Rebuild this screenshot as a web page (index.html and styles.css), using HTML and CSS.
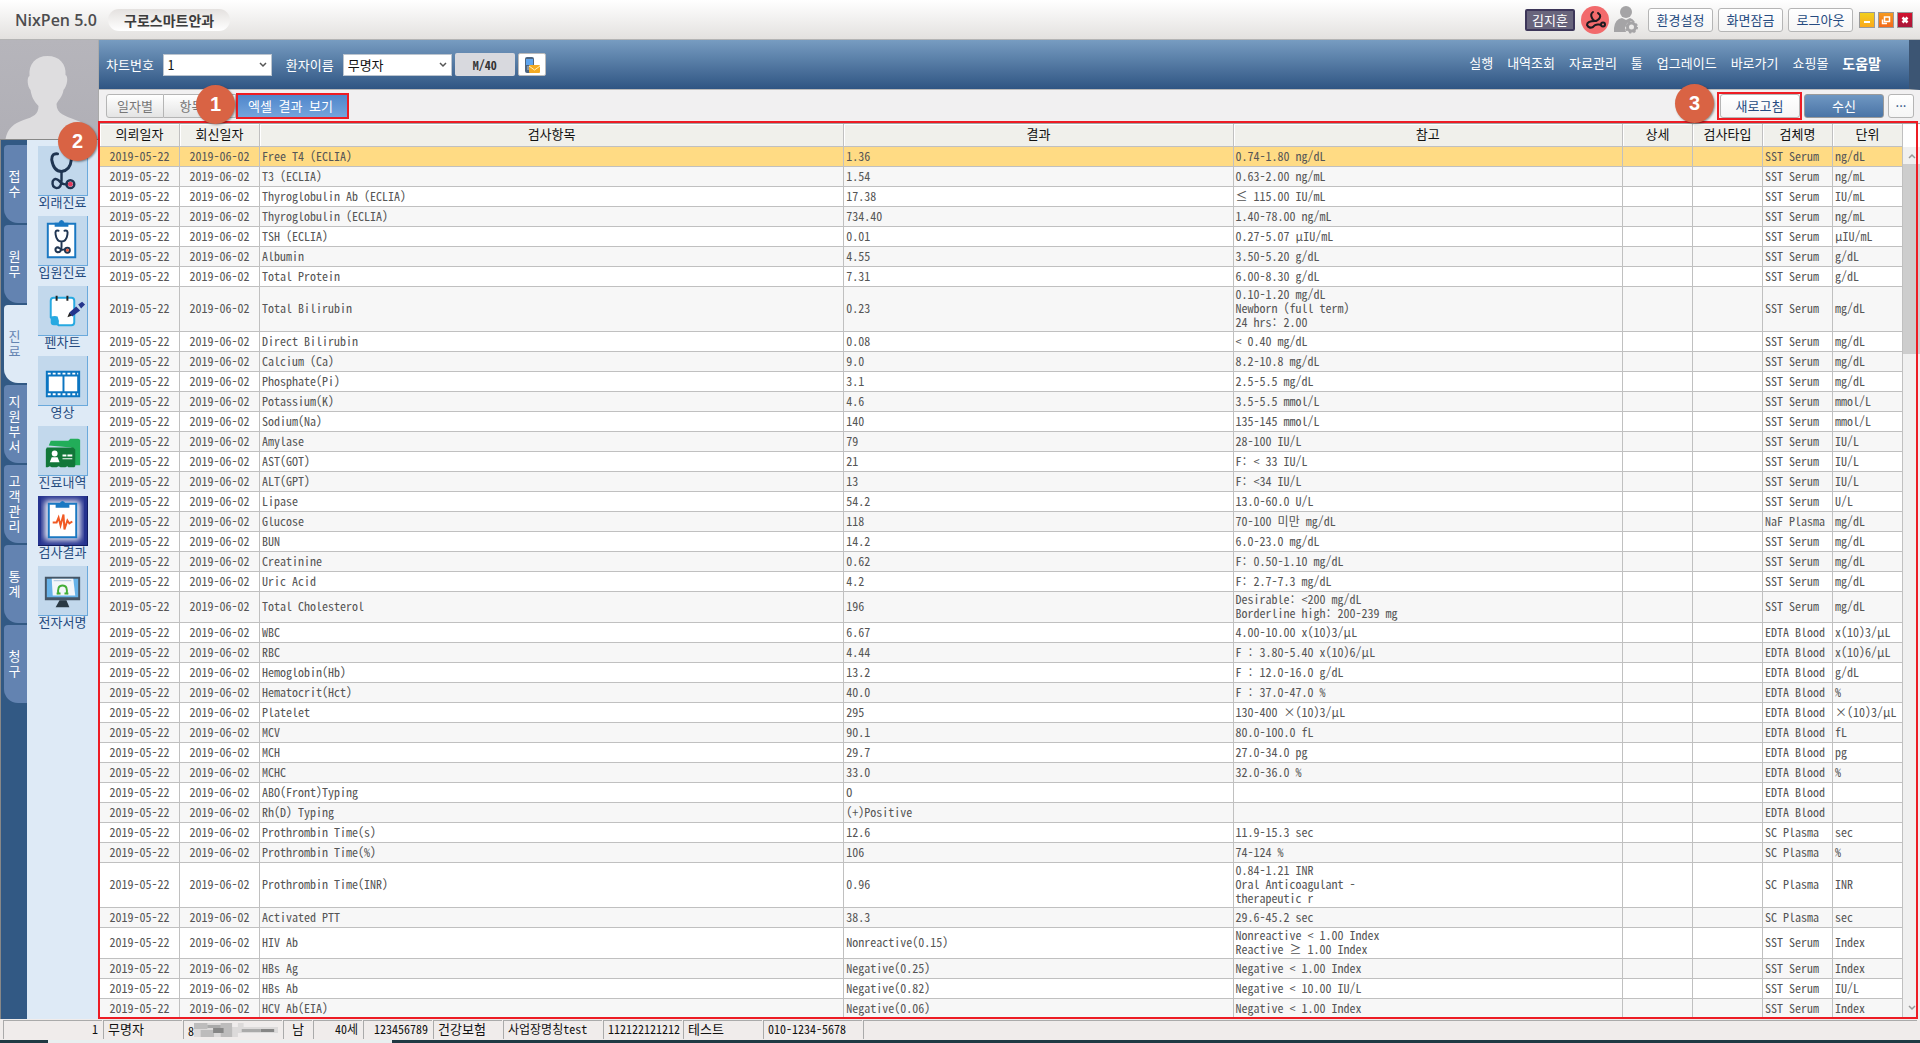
FILE: index.html
```html
<!DOCTYPE html>
<html lang="ko">
<head>
<meta charset="utf-8">
<title>NixPen 5.0</title>
<link rel="stylesheet" href="styles.css">
</head>
<body>
<header class="titlebar">
  <h1 class="brand">NixPen 5.0</h1>
  <span class="clinic">구로스마트안과</span>
  <div class="title-tools">
    <button class="user" type="button">김지훈</button>
    <svg class="doctor" viewBox="0 0 28 28" aria-hidden="true"><circle cx="14" cy="14" r="14" fill="#f26a6c"/><g fill="none" stroke="#1d1a20" stroke-width="2" stroke-linecap="round"><path d="M12 6Q9 8 11 12Q13 16 16 14.500Q20 12 19 9L17 7"/><path d="M14 15Q6 15 6 19Q8 23 12 21Q14 18 18 18.500L20 19"/><circle cx="22" cy="18.500" r="2"/></g></svg>
    <svg class="person" viewBox="0 0 24 28" aria-hidden="true"><g fill="#a5a4a6"><circle cx="12" cy="6" r="6"/><path d="M0 26V22Q1 13 8 12L12 14 16 12Q19 13 20 15Q12 15 11 22L12 26Z"/></g><circle cx="17.500" cy="21" r="4" fill="none" stroke="#a5a4a6" stroke-width="3"/><circle cx="17.500" cy="21" r="5.500" fill="none" stroke="#a5a4a6" stroke-width="2" stroke-dasharray="2.200 2.120"/></svg>
    <button class="btn" type="button">환경설정</button>
    <button class="btn" type="button">화면잠금</button>
    <button class="btn" type="button">로그아웃</button>
    <div class="window-buttons">
      <button class="win min" type="button" aria-label="최소화"><svg viewBox="0 0 14 14"><path d="M4 8h6v2H4z" fill="#fff"/></svg></button>
      <button class="win restore" type="button" aria-label="이전 크기로"><svg viewBox="0 0 14 14"><path d="M5.500 4h5v4.500h-5zM3.500 6.500v4h4.500" fill="none" stroke="#fff" stroke-width="1.500"/></svg></button>
      <button class="win close" type="button" aria-label="닫기"><svg viewBox="0 0 14 14"><path d="M4.500 4.500l5 5M9.500 4.500l-5 5" stroke="#fff" stroke-width="2.500"/></svg></button>
    </div>
  </div>
</header>

<div class="workspace">
  <aside class="sidebar">
    <svg class="avatar" viewBox="0 0 99 99" preserveAspectRatio="xMidYMax slice" aria-hidden="true"><path fill="#dedddf" d="M48 16C60 16 67 24 66 35C69 36 68 46 64 50C63 57 58 61 57 64C57 74 66 76 76 80C88 84 90 90 92 99H6C8 88 14 84 24 80C34 77 39 74 39 66C34 61 32 56 31 50C28 47 27 37 30 36C29 24 36 16 48 16Z"/></svg>
    <div class="nav">
      <nav class="vtabs">
        <button type="button">접수</button>
        <button type="button">원무</button>
        <button type="button" class="on">진료</button>
        <button type="button">지원부서</button>
        <button type="button">고객관리</button>
        <button type="button">통계</button>
        <button type="button">청구</button>
      </nav>
      <nav class="shortcuts">
        <a href="#"><svg viewBox="0 0 50 50"><g fill="none" stroke="#1f3552" stroke-linecap="round"><path d="M20 8Q14 7 14 14Q16 26 24 26Q33 25 34 14Q34 7 28 8" stroke-width="3"/><path d="M24 26V35Q24 43 19 43Q14 42 15 36Q17 32 21 35Q25 40 30 39" stroke-width="2.500"/><circle cx="33" cy="39" r="4" stroke-width="2.500"/></g><circle cx="33" cy="39" r="2.500" fill="#e23b5c"/></svg>외래진료</a>
        <a href="#"><svg viewBox="0 0 50 50"><path d="M10 8h28v34H10z" fill="#fff" stroke="#1a78c2" stroke-width="2"/><path d="M17 11V7h4q1-3 3-3t3 3h4v4z" fill="#1a78c2"/><g fill="none" stroke="#1f3552" stroke-width="2" stroke-linecap="round"><path d="M21 15q-4-1-3 4 1 7 6 7t6-7q1-5-3-4M24 26v5q0 6-4 6-3-1-2-4 2-2 4 0t5 1"/><circle cx="30" cy="35" r="2.500"/></g><circle cx="30" cy="35" r="1.500" fill="#ef5d3b"/></svg>입원진료</a>
        <a href="#"><svg viewBox="0 0 50 50"><path d="M16 12h18q3 0 3 3v22q0 3-3 3H21l-8-8V15q0-3 3-3z" fill="#fff" stroke="#27a9e1" stroke-width="2"/><path d="M13 31q5-1 7 0 2 4 1 9l-5 0q-3 0-3-3z" fill="#27a9e1"/><path d="M19 10v5M30 10v5" stroke="#222" stroke-width="2"/><path d="M30 32l2-5 3 3z" fill="#222"/><path d="M32 27l7-6 4 4-8 6z" fill="#26358c"/><path d="M41 19l4-3 3 3-4 4z" fill="#26358c"/></svg>펜차트</a>
        <a href="#"><svg viewBox="0 0 50 50"><path d="M8 15h35v27H8z" fill="#0b75c1"/><path d="M11 21h14v15H11zM27 21h13v15H27z" fill="#fff"/><path d="M10 18h31M10 39h31" stroke="#fff" stroke-width="2" stroke-dasharray="3 2"/></svg>영상</a>
        <a href="#"><svg viewBox="0 0 50 50"><path d="M11 20l2-5h18l2-2h8l2 1v26h-6l-3-18z" fill="#22ad59"/><path d="M9 22h27l2 2v17l-1 1h-6l-1-1-2 1h-5l-2-1-2 1h-5l-2-1-2 1H8V24z" fill="#127739"/><circle cx="17" cy="28" r="3" fill="#fff"/><path d="M12 37l2-5h6l2 5zM25 29h4v2h-4zM30 29h5v2h-5zM25 33h10v1H25z" fill="#fff"/></svg>진료내역</a>
        <a href="#" class="on"><svg viewBox="0 0 50 50"><defs><filter id="glow"><feGaussianBlur stdDeviation="3"/></filter></defs><rect x="7" y="5" width="36" height="40" fill="#fff" filter="url(#glow)"/><path d="M11 8h28v34H11z" fill="#fff" stroke="#1a78c2" stroke-width="2"/><path d="M18 12V8h4q1-3 3-3t3 3h4v4z" fill="#1a78c2"/><path d="M15 27h4l2-5 2 8 3-11 1 15 3-9 2 3 3-2" fill="none" stroke="#f15a24" stroke-width="2"/></svg>검사결과</a>
        <a href="#"><svg viewBox="0 0 50 50"><path d="M7 11h36v24H7z" fill="#455565"/><path d="M9 13h32v19H9z" fill="#66b2e8"/><path d="M14 13h22l2 17H15z" fill="#f3f6fa"/><path d="M16 15h18" stroke="#aac3dc"/><path d="M21 29q-2-9 4-9t4 9M19 28h4M27 28h4" fill="none" stroke="#42ae36" stroke-width="2"/><path d="M22 35h7l3 7H18z" fill="#2b3a44"/></svg>전자서명</a>
      </nav>
    </div>
  </aside>

  <main class="content">
    <div class="patientbar">
      <div class="patient-fields">
        <label for="chart">차트번호</label>
        <span class="select"><select id="chart"><option>1</option></select><svg viewBox="0 0 8 6" aria-hidden="true"><path d="M1 1l3 3 3-3" fill="none" stroke="#555" stroke-width="1.500"/></svg></span>
        <label for="name">환자이름</label>
        <span class="select"><select id="name"><option>무명자</option></select><svg viewBox="0 0 8 6" aria-hidden="true"><path d="M1 1l3 3 3-3" fill="none" stroke="#555" stroke-width="1.500"/></svg></span>
        <span class="sexage">M/40</span>
        <button class="phone" type="button" aria-label="문자 보내기"><svg viewBox="0 0 18 18"><rect x="2" y="1" width="9" height="16" rx="2" fill="#4d6580"/><rect x="3" y="3" width="7" height="6" fill="#5fa5ee"/><path d="M4 11h5M4 13h5" stroke="#bcc9d6"/><rect x="6" y="9" width="11" height="8" rx="1" fill="#f5ab22"/><path d="M6 10l5.500 4 5.500-4" fill="none" stroke="#fff0b8"/></svg></button>
      </div>
      <nav class="menu">
        <a href="#">실행</a><a href="#">내역조회</a><a href="#">자료관리</a><a href="#">툴</a><a href="#">업그레이드</a><a href="#">바로가기</a><a href="#">쇼핑몰</a><a href="#" class="help">도움말</a>
      </nav>
    </div>

    <div class="toolbar">
      <div class="views">
        <button type="button">일자별</button><button type="button" class="second">항목별</button><button type="button" class="on">엑셀 결과 보기</button>
        <span class="callout one">1</span>
      </div>
      <div class="actions">
        <div class="marked"><button type="button" class="btn wide">새로고침</button><span class="callout three">3</span></div>
        <button type="button" class="btn wide primary">수신</button>
        <button type="button" class="btn more" aria-label="더 보기">···</button>
      </div>
    </div>

    <section class="results">
      <span class="callout two">2</span>
      <table>
        <colgroup><col class="date"><col class="date"><col class="item"><col class="value"><col><col class="small"><col class="small"><col class="small"><col class="small"></colgroup>
        <thead><tr><th>의뢰일자</th><th>회신일자</th><th>검사항목</th><th>결과</th><th>참고</th><th>상세</th><th>검사타입</th><th>검체명</th><th>단위</th></tr></thead>
        <tbody>
        <tr class="selected"><td>2019-05-22</td><td>2019-06-02</td><td>Free T4 (ECLIA)</td><td>1.36</td><td>0.74-1.80 ng/dL</td><td></td><td></td><td>SST Serum</td><td>ng/dL</td></tr>
        <tr><td>2019-05-22</td><td>2019-06-02</td><td>T3 (ECLIA)</td><td>1.54</td><td>0.63-2.00 ng/mL</td><td></td><td></td><td>SST Serum</td><td>ng/mL</td></tr>
        <tr><td>2019-05-22</td><td>2019-06-02</td><td>Thyroglobulin Ab (ECLIA)</td><td>17.38</td><td>≤ 115.00 IU/mL</td><td></td><td></td><td>SST Serum</td><td>IU/mL</td></tr>
        <tr><td>2019-05-22</td><td>2019-06-02</td><td>Thyroglobulin (ECLIA)</td><td>734.40</td><td>1.40-78.00 ng/mL</td><td></td><td></td><td>SST Serum</td><td>ng/mL</td></tr>
        <tr><td>2019-05-22</td><td>2019-06-02</td><td>TSH (ECLIA)</td><td>0.01</td><td>0.27-5.07 μIU/mL</td><td></td><td></td><td>SST Serum</td><td>μIU/mL</td></tr>
        <tr><td>2019-05-22</td><td>2019-06-02</td><td>Albumin</td><td>4.55</td><td>3.50-5.20 g/dL</td><td></td><td></td><td>SST Serum</td><td>g/dL</td></tr>
        <tr><td>2019-05-22</td><td>2019-06-02</td><td>Total Protein</td><td>7.31</td><td>6.00-8.30 g/dL</td><td></td><td></td><td>SST Serum</td><td>g/dL</td></tr>
        <tr><td>2019-05-22</td><td>2019-06-02</td><td>Total Bilirubin</td><td>0.23</td><td>0.10-1.20 mg/dL<br>Newborn (full term)<br>24 hrs: 2.00</td><td></td><td></td><td>SST Serum</td><td>mg/dL</td></tr>
        <tr><td>2019-05-22</td><td>2019-06-02</td><td>Direct Bilirubin</td><td>0.08</td><td>&lt; 0.40 mg/dL</td><td></td><td></td><td>SST Serum</td><td>mg/dL</td></tr>
        <tr><td>2019-05-22</td><td>2019-06-02</td><td>Calcium (Ca)</td><td>9.0</td><td>8.2-10.8 mg/dL</td><td></td><td></td><td>SST Serum</td><td>mg/dL</td></tr>
        <tr><td>2019-05-22</td><td>2019-06-02</td><td>Phosphate(Pi)</td><td>3.1</td><td>2.5-5.5 mg/dL</td><td></td><td></td><td>SST Serum</td><td>mg/dL</td></tr>
        <tr><td>2019-05-22</td><td>2019-06-02</td><td>Potassium(K)</td><td>4.6</td><td>3.5-5.5 mmol/L</td><td></td><td></td><td>SST Serum</td><td>mmol/L</td></tr>
        <tr><td>2019-05-22</td><td>2019-06-02</td><td>Sodium(Na)</td><td>140</td><td>135-145 mmol/L</td><td></td><td></td><td>SST Serum</td><td>mmol/L</td></tr>
        <tr><td>2019-05-22</td><td>2019-06-02</td><td>Amylase</td><td>79</td><td>28-100 IU/L</td><td></td><td></td><td>SST Serum</td><td>IU/L</td></tr>
        <tr><td>2019-05-22</td><td>2019-06-02</td><td>AST(GOT)</td><td>21</td><td>F: &lt; 33 IU/L</td><td></td><td></td><td>SST Serum</td><td>IU/L</td></tr>
        <tr><td>2019-05-22</td><td>2019-06-02</td><td>ALT(GPT)</td><td>13</td><td>F: &lt;34 IU/L</td><td></td><td></td><td>SST Serum</td><td>IU/L</td></tr>
        <tr><td>2019-05-22</td><td>2019-06-02</td><td>Lipase</td><td>54.2</td><td>13.0-60.0 U/L</td><td></td><td></td><td>SST Serum</td><td>U/L</td></tr>
        <tr><td>2019-05-22</td><td>2019-06-02</td><td>Glucose</td><td>118</td><td>70-100 미만 mg/dL</td><td></td><td></td><td>NaF Plasma</td><td>mg/dL</td></tr>
        <tr><td>2019-05-22</td><td>2019-06-02</td><td>BUN</td><td>14.2</td><td>6.0-23.0 mg/dL</td><td></td><td></td><td>SST Serum</td><td>mg/dL</td></tr>
        <tr><td>2019-05-22</td><td>2019-06-02</td><td>Creatinine</td><td>0.62</td><td>F: 0.50-1.10 mg/dL</td><td></td><td></td><td>SST Serum</td><td>mg/dL</td></tr>
        <tr><td>2019-05-22</td><td>2019-06-02</td><td>Uric Acid</td><td>4.2</td><td>F: 2.7-7.3 mg/dL</td><td></td><td></td><td>SST Serum</td><td>mg/dL</td></tr>
        <tr><td>2019-05-22</td><td>2019-06-02</td><td>Total Cholesterol</td><td>196</td><td>Desirable: &lt;200 mg/dL<br>Borderline high: 200-239 mg</td><td></td><td></td><td>SST Serum</td><td>mg/dL</td></tr>
        <tr><td>2019-05-22</td><td>2019-06-02</td><td>WBC</td><td>6.67</td><td>4.00-10.00 x(10)3/μL</td><td></td><td></td><td>EDTA Blood</td><td>x(10)3/μL</td></tr>
        <tr><td>2019-05-22</td><td>2019-06-02</td><td>RBC</td><td>4.44</td><td>F : 3.80-5.40 x(10)6/μL</td><td></td><td></td><td>EDTA Blood</td><td>x(10)6/μL</td></tr>
        <tr><td>2019-05-22</td><td>2019-06-02</td><td>Hemoglobin(Hb)</td><td>13.2</td><td>F : 12.0-16.0 g/dL</td><td></td><td></td><td>EDTA Blood</td><td>g/dL</td></tr>
        <tr><td>2019-05-22</td><td>2019-06-02</td><td>Hematocrit(Hct)</td><td>40.0</td><td>F : 37.0-47.0 %</td><td></td><td></td><td>EDTA Blood</td><td>%</td></tr>
        <tr><td>2019-05-22</td><td>2019-06-02</td><td>Platelet</td><td>295</td><td>130-400 ×(10)3/μL</td><td></td><td></td><td>EDTA Blood</td><td>×(10)3/μL</td></tr>
        <tr><td>2019-05-22</td><td>2019-06-02</td><td>MCV</td><td>90.1</td><td>80.0-100.0 fL</td><td></td><td></td><td>EDTA Blood</td><td>fL</td></tr>
        <tr><td>2019-05-22</td><td>2019-06-02</td><td>MCH</td><td>29.7</td><td>27.0-34.0 pg</td><td></td><td></td><td>EDTA Blood</td><td>pg</td></tr>
        <tr><td>2019-05-22</td><td>2019-06-02</td><td>MCHC</td><td>33.0</td><td>32.0-36.0 %</td><td></td><td></td><td>EDTA Blood</td><td>%</td></tr>
        <tr><td>2019-05-22</td><td>2019-06-02</td><td>ABO(Front)Typing</td><td>O</td><td></td><td></td><td></td><td>EDTA Blood</td><td></td></tr>
        <tr><td>2019-05-22</td><td>2019-06-02</td><td>Rh(D) Typing</td><td>(+)Positive</td><td></td><td></td><td></td><td>EDTA Blood</td><td></td></tr>
        <tr><td>2019-05-22</td><td>2019-06-02</td><td>Prothrombin Time(s)</td><td>12.6</td><td>11.9-15.3 sec</td><td></td><td></td><td>SC Plasma</td><td>sec</td></tr>
        <tr><td>2019-05-22</td><td>2019-06-02</td><td>Prothrombin Time(%)</td><td>106</td><td>74-124 %</td><td></td><td></td><td>SC Plasma</td><td>%</td></tr>
        <tr><td>2019-05-22</td><td>2019-06-02</td><td>Prothrombin Time(INR)</td><td>0.96</td><td>0.84-1.21 INR<br>Oral Anticoagulant -<br>therapeutic r</td><td></td><td></td><td>SC Plasma</td><td>INR</td></tr>
        <tr><td>2019-05-22</td><td>2019-06-02</td><td>Activated PTT</td><td>38.3</td><td>29.6-45.2 sec</td><td></td><td></td><td>SC Plasma</td><td>sec</td></tr>
        <tr><td>2019-05-22</td><td>2019-06-02</td><td>HIV Ab</td><td>Nonreactive(0.15)</td><td>Nonreactive &lt; 1.00 Index<br>Reactive ≥ 1.00 Index</td><td></td><td></td><td>SST Serum</td><td>Index</td></tr>
        <tr><td>2019-05-22</td><td>2019-06-02</td><td>HBs Ag</td><td>Negative(0.25)</td><td>Negative &lt; 1.00 Index</td><td></td><td></td><td>SST Serum</td><td>Index</td></tr>
        <tr><td>2019-05-22</td><td>2019-06-02</td><td>HBs Ab</td><td>Negative(0.82)</td><td>Negative &lt; 10.00 IU/L</td><td></td><td></td><td>SST Serum</td><td>IU/L</td></tr>
        <tr><td>2019-05-22</td><td>2019-06-02</td><td>HCV Ab(EIA)</td><td>Negative(0.06)</td><td>Negative &lt; 1.00 Index</td><td></td><td></td><td>SST Serum</td><td>Index</td></tr>
        </tbody>
      </table>
      <div class="scrollbar" aria-hidden="true">
        <svg viewBox="0 0 8 6"><path d="M1 5l3-3 3 3" fill="none" stroke="#999" stroke-width="1.500"/></svg>
        <div class="thumb"></div>
        <svg class="down" viewBox="0 0 8 6"><path d="M1 1l3 3 3-3" fill="none" stroke="#999" stroke-width="1.500"/></svg>
      </div>
    </section>
  </main>
</div>

<footer class="status">
  <span class="right">1</span><span class="hangul">무명자</span><span class="masked">8<svg viewBox="0 0 88 14" preserveAspectRatio="none" aria-hidden="true"><path fill="#dcdada" d="M0 0h88v14H0z"/><path fill="#bdbcbc" d="M0 0h14v6H0zM7 7h14v7H7zM28 0h12v14H28z"/><path fill="#868686" d="M20 5h11v5H20zM70 6h14v3H70z"/><path fill="#aaa" d="M14 2h14v3H14zM50 6h20v3H50z"/><path fill="#efecec" d="M40 0h6v4h-6zM52 0h36v4H52zM46 10h42v4H46z"/></svg></span><span class="hangul center">남</span><span class="right">40세</span><span class="right">123456789</span><span class="hangul">건강보험</span><span>사업장명칭test</span><span>112122121212</span><span class="hangul">테스트</span><span>010-1234-5678</span><span></span>
</footer>
<div class="taskbar"><div class="window"></div></div>
</body>
</html>
```

FILE: styles.css
```css
* { box-sizing: border-box; }

body {
  margin: 0;
  background: #f0eeed;
  color: #111;
  font: 13px/14px "Noto Sans Mono CJK KR", "Liberation Mono", "Noto Sans CJK KR", monospace;
}

button, select { font: inherit; color: inherit; }
button { padding: 0; cursor: pointer; }
a { color: inherit; text-decoration: none; }
svg { display: block; }

/* Title bar */
.titlebar {
  display: flex;
  align-items: center;
  height: 40px;
  padding: 0 7px 0 15px;
  background: linear-gradient(#fff, #e3e1df);
  border-bottom: 1px solid #b4b4b4;
}
.brand {
  margin: 0;
  width: 93px;
  font: 600 16px/24px "Open Sans", "Noto Sans", sans-serif;
  color: #4d4d4f;
  white-space: nowrap;
}
.clinic {
  padding: 0 16px;
  font-size: 14px;
  font-weight: bold;
  line-height: 22px;
  color: #3c3c3c;
  border-radius: 11px;
  background: linear-gradient(#e4e1df, #fff);
}
.title-tools { display: flex; align-items: center; gap: 5px; margin-left: auto; }
.user {
  width: 50px;
  height: 22px;
  background: #68647c;
  border: 2px solid #3d3659;
  border-radius: 2px;
  color: #fff;
  line-height: 16px;
}
.doctor { width: 28px; height: 28px; margin-left: 1px; }
.person { width: 24px; height: 28px; margin-right: 5px; }
.btn {
  width: 65px;
  height: 24px;
  background: linear-gradient(#fff, #f5f5f5);
  border: 1px solid #b5b5b5;
  border-radius: 3px;
  color: #254a80;
}
.window-buttons { display: flex; gap: 3px; margin-left: 1px; }
.win { width: 16px; height: 16px; border: 1px solid #999; }
.min { background: linear-gradient(#f2cf1c, #fba91a); }
.restore { background: linear-gradient(#f59a1e, #f4691b); }
.close { background: linear-gradient(#d3122e, #a8183b); }

/* Side navigation */
.workspace { display: grid; grid-template-columns: 99px 1fr; }
.sidebar {
  display: flex;
  flex-direction: column;
  border-right: 1px solid #aaa;
}
.avatar {
  width: 100%;
  height: 100px;
  background: linear-gradient(#b6b5bb, #b0afb6);
  border-bottom: 1px solid #888;
}
.nav {
  flex: 1;
  display: grid;
  grid-template-columns: 26px 1fr;
  background: #deeaf6;
  border-left: 1px solid #888;
}
.vtabs {
  display: flex;
  flex-direction: column;
  gap: 2px;
  padding: 5px 0 0 3px;
  background: #325984;
}
.vtabs button {
  height: 78px;
  padding: 0 6px 2px 4px;
  border: 0;
  border-radius: 4px 0 0 14px;
  background: #6383b1;
  color: #fff;
  line-height: 15px;
  word-break: break-all;
}
.vtabs .on { background: #deeaf6; color: #6383b1; }
.shortcuts {
  display: flex;
  flex-direction: column;
  align-items: center;
  gap: 8px;
  padding-top: 6px;
  color: #254a80;
  line-height: 12px;
  text-align: center;
}
.shortcuts svg {
  width: 50px;
  height: 50px;
  margin: 0 auto;
  background: #c2d8ec;
  border: solid #6aa9dc;
  border-width: 0 1px 1px 0;
}
.shortcuts .on svg { background: #25338f; border-color: #101c60; }

/* Patient bar */
.content { min-width: 0; }
.patientbar {
  display: flex;
  justify-content: space-between;
  height: 50px;
  color: #fff;
  border-bottom: 1px solid #bbb;
  border-right: 11px solid #3c5573;
  background: linear-gradient(#779cc1, #2f5583);
}
.patient-fields { display: flex; align-items: center; padding-left: 7px; }
.select { display: grid; align-items: center; margin: 0 14px 0 9px; }
.select + .sexage { margin-left: -11px; }
.select > * { grid-area: 1 / 1; }
.select select {
  width: 109px;
  height: 22px;
  padding: 0 4px;
  appearance: none;
  border: 1px solid #bcc5cf;
  border-radius: 0;
  background: #fff;
  color: #111;
}
.select svg { width: 8px; height: 6px; margin-right: 5px; justify-self: end; pointer-events: none; }
.sexage {
  width: 60px;
  font-size: 12px;
  line-height: 23px;
  text-align: center;
  font-weight: bold;
  color: #333;
  background: #d8d9de;
  border-radius: 2px;
}
.phone {
  display: grid;
  place-items: center;
  width: 28px;
  height: 23px;
  margin-left: 3px;
  background: #fff;
  border: 1px solid #bbb;
  border-radius: 2px;
}
.phone svg { width: 18px; height: 18px; }
.menu { display: flex; align-items: center; gap: 14px; padding: 0 28px 3px 0; }
.help { font-size: 14px; font-weight: bold; }

/* View switch and actions */
.toolbar {
  display: flex;
  justify-content: space-between;
  align-items: center;
  height: 33px;
  padding: 0 6px 2px 7px;
  background: #f1f0f1;
}
.views { position: relative; display: flex; align-items: center; }
.views button {
  width: 58px;
  height: 24px;
  border: 1px solid #b5b5b5;
  border-radius: 3px 0 0 3px;
  background: linear-gradient(#fff, #e4e4e4);
  color: #777;
}
.views .second { width: 72px; padding-right: 4px; border-left: 0; border-radius: 0; }
.views .on {
  width: 113px;
  height: 26px;
  padding-right: 4px;
  border: 2px solid #ed1c24;
  border-radius: 0;
  background: linear-gradient(#4f86cb, #74a4dc);
  color: #fff;
}
.actions { display: flex; align-items: center; gap: 4px; }
.marked {
  position: relative;
  display: grid;
  place-items: center;
  width: 85px;
  height: 28px;
  margin-right: -2px;
  border: 2px solid #ed1c24;
}
.wide { width: 80px; }
.primary { background: linear-gradient(#6f97c2, #4a74a6); border-color: #9a9a9a; color: #fff; }
.more { width: 26px; }
.callout {
  position: absolute;
  z-index: 2;
  width: 39px;
  height: 39px;
  border-radius: 50%;
  background: #d96344;
  box-shadow: 1px 1px 2px #0006;
  color: #fff;
  font: bold 20px/39px "Liberation Sans", sans-serif;
  text-align: center;
}
.one { left: 90px; top: -8px; }
.two { left: -42px; top: -2px; }
.three { right: 86px; top: -10px; }

/* Results grid */
.results {
  position: relative;
  display: grid;
  grid-template-columns: 1fr 17px;
  border: solid #a5a5a5;
  border-width: 1px 0 0 1px;
  background: #fff;
}
/* red outline round the whole grid */
.results::after {
  content: "";
  position: absolute;
  inset: -3px 2px 0 -2px;
  border: 2px solid #ed1c24;
  pointer-events: none;
}
table { width: 100%; table-layout: fixed; border-spacing: 0; color: #555; }
.date { width: 80px; }
.item { width: 32.4%; }
.value { width: 21.6%; }
.small { width: 70px; }
th, td {
  padding: 0 0 2px 2px;
  border: solid #c0c0c0;
  border-width: 0 1px 1px 0;
  text-align: left;
  white-space: nowrap;
}
th {
  height: 23px;
  padding: 0 0 2px;
  background: #f0f0eb;
  box-shadow: inset 1px 1px #fff;
  color: #111;
  font-weight: normal;
  text-align: center;
}
td { height: 20px; font-size: 12px; }
td:nth-child(-n + 2) { padding-left: 0; text-align: center; }
tbody tr:nth-child(even) { background: #f7f7f7; }
tbody .selected { background: #ffdb84; }
.scrollbar {
  display: flex;
  flex-direction: column;
  align-items: center;
  margin-top: 23px;
  padding: 6px 0 8px;
  background: #f0f0f0;
}
.scrollbar svg { width: 8px; height: 6px; }
.thumb { width: 100%; height: 190px; margin-top: 5px; background: #cdcdcd; }
.scrollbar .down { margin-top: auto; }

/* Status bar */
.status {
  display: grid;
  grid-template-columns: 100px 80px 100px 30px 50px 70px 70px 100px 80px 80px 100px 1fr;
  height: 21px;
  padding: 1px 2px 1px 3px;
  background: #f0eceb;
  font-size: 12px;
}
.status span {
  margin-right: 1px;
  padding: 0 4px;
  border: solid #aaa;
  border-width: 1px 0 0 1px;
  line-height: 15px;
  white-space: nowrap;
}
.status .hangul { font-size: 13px; }
.status .right { text-align: right; }
.status .center { text-align: center; }
.status .masked { display: flex; align-items: center; }
.masked svg { flex: 1; min-width: 0; height: 14px; }
.taskbar { height: 3px; padding: 0 48px; background: #1f3943; }
.taskbar .window { width: 344px; height: 3px; background: #e9eff0; }
```
